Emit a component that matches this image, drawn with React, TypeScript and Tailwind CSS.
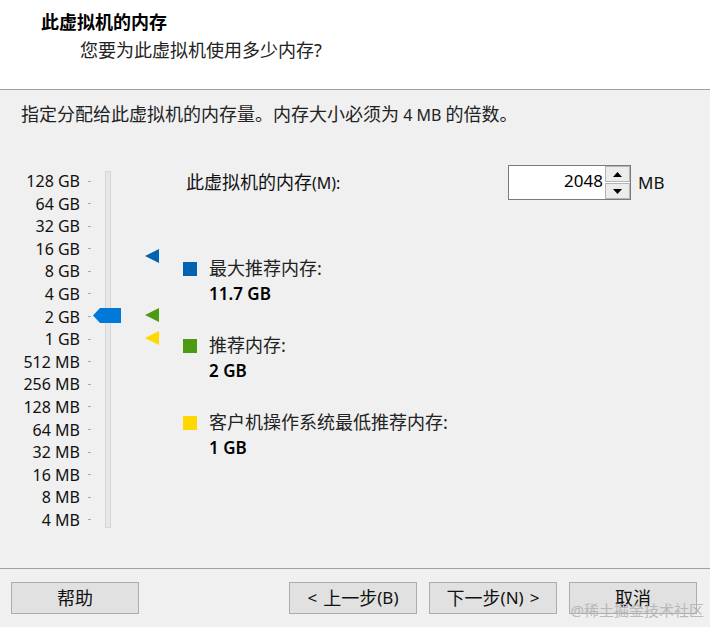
import React from "react";

const C = ({ children, className = "" }: { children: React.ReactNode; className?: string }) => (
  <span className={"text-[18px] " + className}>{children}</span>
);

const labels = [
  "128 GB", "64 GB", "32 GB", "16 GB", "8 GB", "4 GB", "2 GB", "1 GB",
  "512 MB", "256 MB", "128 MB", "64 MB", "32 MB", "16 MB", "8 MB", "4 MB",
];

const Tri = ({ color, top }: { color: string; top: string }) => (
  <svg className={"absolute left-0 " + top} width="14" height="14" viewBox="0 0 14 14">
    <polygon points="0,7 14,0 14,14" fill={color} />
  </svg>
);

const Legend = ({ color, label, value }: { color: string; label: string; value: string }) => (
  <div className="flex flex-col">
    <div className="flex items-center h-[25px]">
      <div className={"w-[14px] h-[14px] " + color} />
      <C className="ml-[12px] text-[#222]">{label}</C>
    </div>
    <div className="h-[25px] leading-[25px] pl-[26px] font-semibold text-[17px] text-black">{value}</div>
  </div>
);

const Btn = ({ children }: { children: React.ReactNode }) => (
  <div className="w-[128px] h-[32px] border border-[#adadad] bg-[#e1e1e1] flex items-center justify-center text-[#111]">
    {children}
  </div>
);

export default function App() {
  return (
    <div className="w-[710px] h-[627px] bg-[#f0f0f0] flex flex-col text-[16px] text-black font-['Noto_Sans','Noto_Sans_CJK_SC',sans-serif] relative overflow-hidden">
      <header className="h-[90px] bg-white border-b border-[#a0a0a0] pt-[10px] shrink-0">
        <div className="pl-[41px] h-[24px] leading-[24px]">
          <C className="font-bold">此虚拟机的内存</C>
        </div>
        <div className="pl-[80px] h-[24px] leading-[24px] mt-[4px]">
          <C className="text-[#222]">您要为此虚拟机使用多少内存?</C>
        </div>
      </header>

      <main className="h-[478px] shrink-0 pt-[12px]">
        <div className="pl-[21px] h-[24px] leading-[24px] text-[#222] whitespace-nowrap">
          <C>指定分配给此虚拟机的内存量。内存大小必须为</C> 4 MB <C>的倍数。</C>
        </div>

        <div className="flex mt-[39px]">
          <div className="w-[80px] mt-[6px] h-[359px] flex flex-col justify-between items-end">
            {labels.map((l) => (
              <div key={l} className="h-[20px] leading-[20px] whitespace-nowrap text-[#111]">{l}</div>
            ))}
          </div>
          <div className="ml-[8px] w-[3px] mt-[6px] h-[359px] flex flex-col justify-between">
            {labels.map((l) => (
              <div key={l} className="h-[20px] flex items-center">
                <div className="w-[3px] h-[1px] bg-[#a8a8a8]" />
              </div>
            ))}
          </div>
          <div className="ml-[14px] mt-[6px] w-[6px] h-[357px] border border-[#d6d6d6] bg-[#e7e7e7] relative">
            <svg className="absolute left-[-13px] top-[136px]" width="28" height="15" viewBox="0 0 28 15">
              <polygon points="0,7.5 7,0 28,0 28,15 7,15" fill="#0078d7" />
            </svg>
          </div>
          <div className="ml-[34px] mt-[6px] w-[14px] h-[357px] relative">
            <Tri color="#0063b1" top="top-[78px]" />
            <Tri color="#4c9a10" top="top-[137px]" />
            <Tri color="#ffd800" top="top-[160px]" />
          </div>

          <div className="ml-[24px] flex flex-col">
            <div className="flex items-center h-[35px]">
              <div className="w-[325px] pl-[3px] text-[#111] whitespace-nowrap">
                <C>此虚拟机的内存</C>(M):
              </div>
              <div className="w-[123px] h-[35px] border border-[#7a7a7a] bg-white flex">
                <div className="flex-1 text-right pr-[2px] leading-[30px] text-[17px] text-black">2048</div>
                <div className="w-[25px] flex flex-col gap-[1px]">
                  <div className="flex-1 border border-[#b5b5b5] bg-[#ececec] flex items-center justify-center">
                    <svg width="9" height="5" viewBox="0 0 9 5"><polygon points="0,5 4.5,0 9,5" fill="#000" /></svg>
                  </div>
                  <div className="flex-1 border border-[#b5b5b5] bg-[#ececec] flex items-center justify-center">
                    <svg width="9" height="5" viewBox="0 0 9 5"><polygon points="0,0 9,0 4.5,5" fill="#000" /></svg>
                  </div>
                </div>
              </div>
              <div className="ml-[7px] text-[17px] text-[#111]">MB</div>
            </div>

            <div className="mt-[56px] flex flex-col gap-[27px]">
              <Legend color="bg-[#0063b1]" label="最大推荐内存:" value="11.7 GB" />
              <Legend color="bg-[#4c9a10]" label="推荐内存:" value="2 GB" />
              <Legend color="bg-[#ffd800]" label="客户机操作系统最低推荐内存:" value="1 GB" />
            </div>
          </div>
        </div>
      </main>

      <footer className="flex-1 border-t border-[#a0a0a0] pt-[13px] px-[11px] flex">
        <Btn><C>帮助</C></Btn>
        <div className="ml-auto flex gap-[12px] mr-[2px]">
          <Btn><span className="text-[17px]">&lt;</span><C className="ml-[6px]">上一步</C><span className="text-[17px]">(B)</span></Btn>
          <Btn><C>下一步</C><span className="text-[17px]">(N)</span><span className="text-[17px] ml-[6px]">&gt;</span></Btn>
          <Btn><C>取消</C></Btn>
        </div>
      </footer>

      <div className="absolute right-[6px] bottom-[6px] text-[15px] text-[#b4b4b4] opacity-90 whitespace-nowrap">
        @稀土掘金技术社区
      </div>
    </div>
  );
}
